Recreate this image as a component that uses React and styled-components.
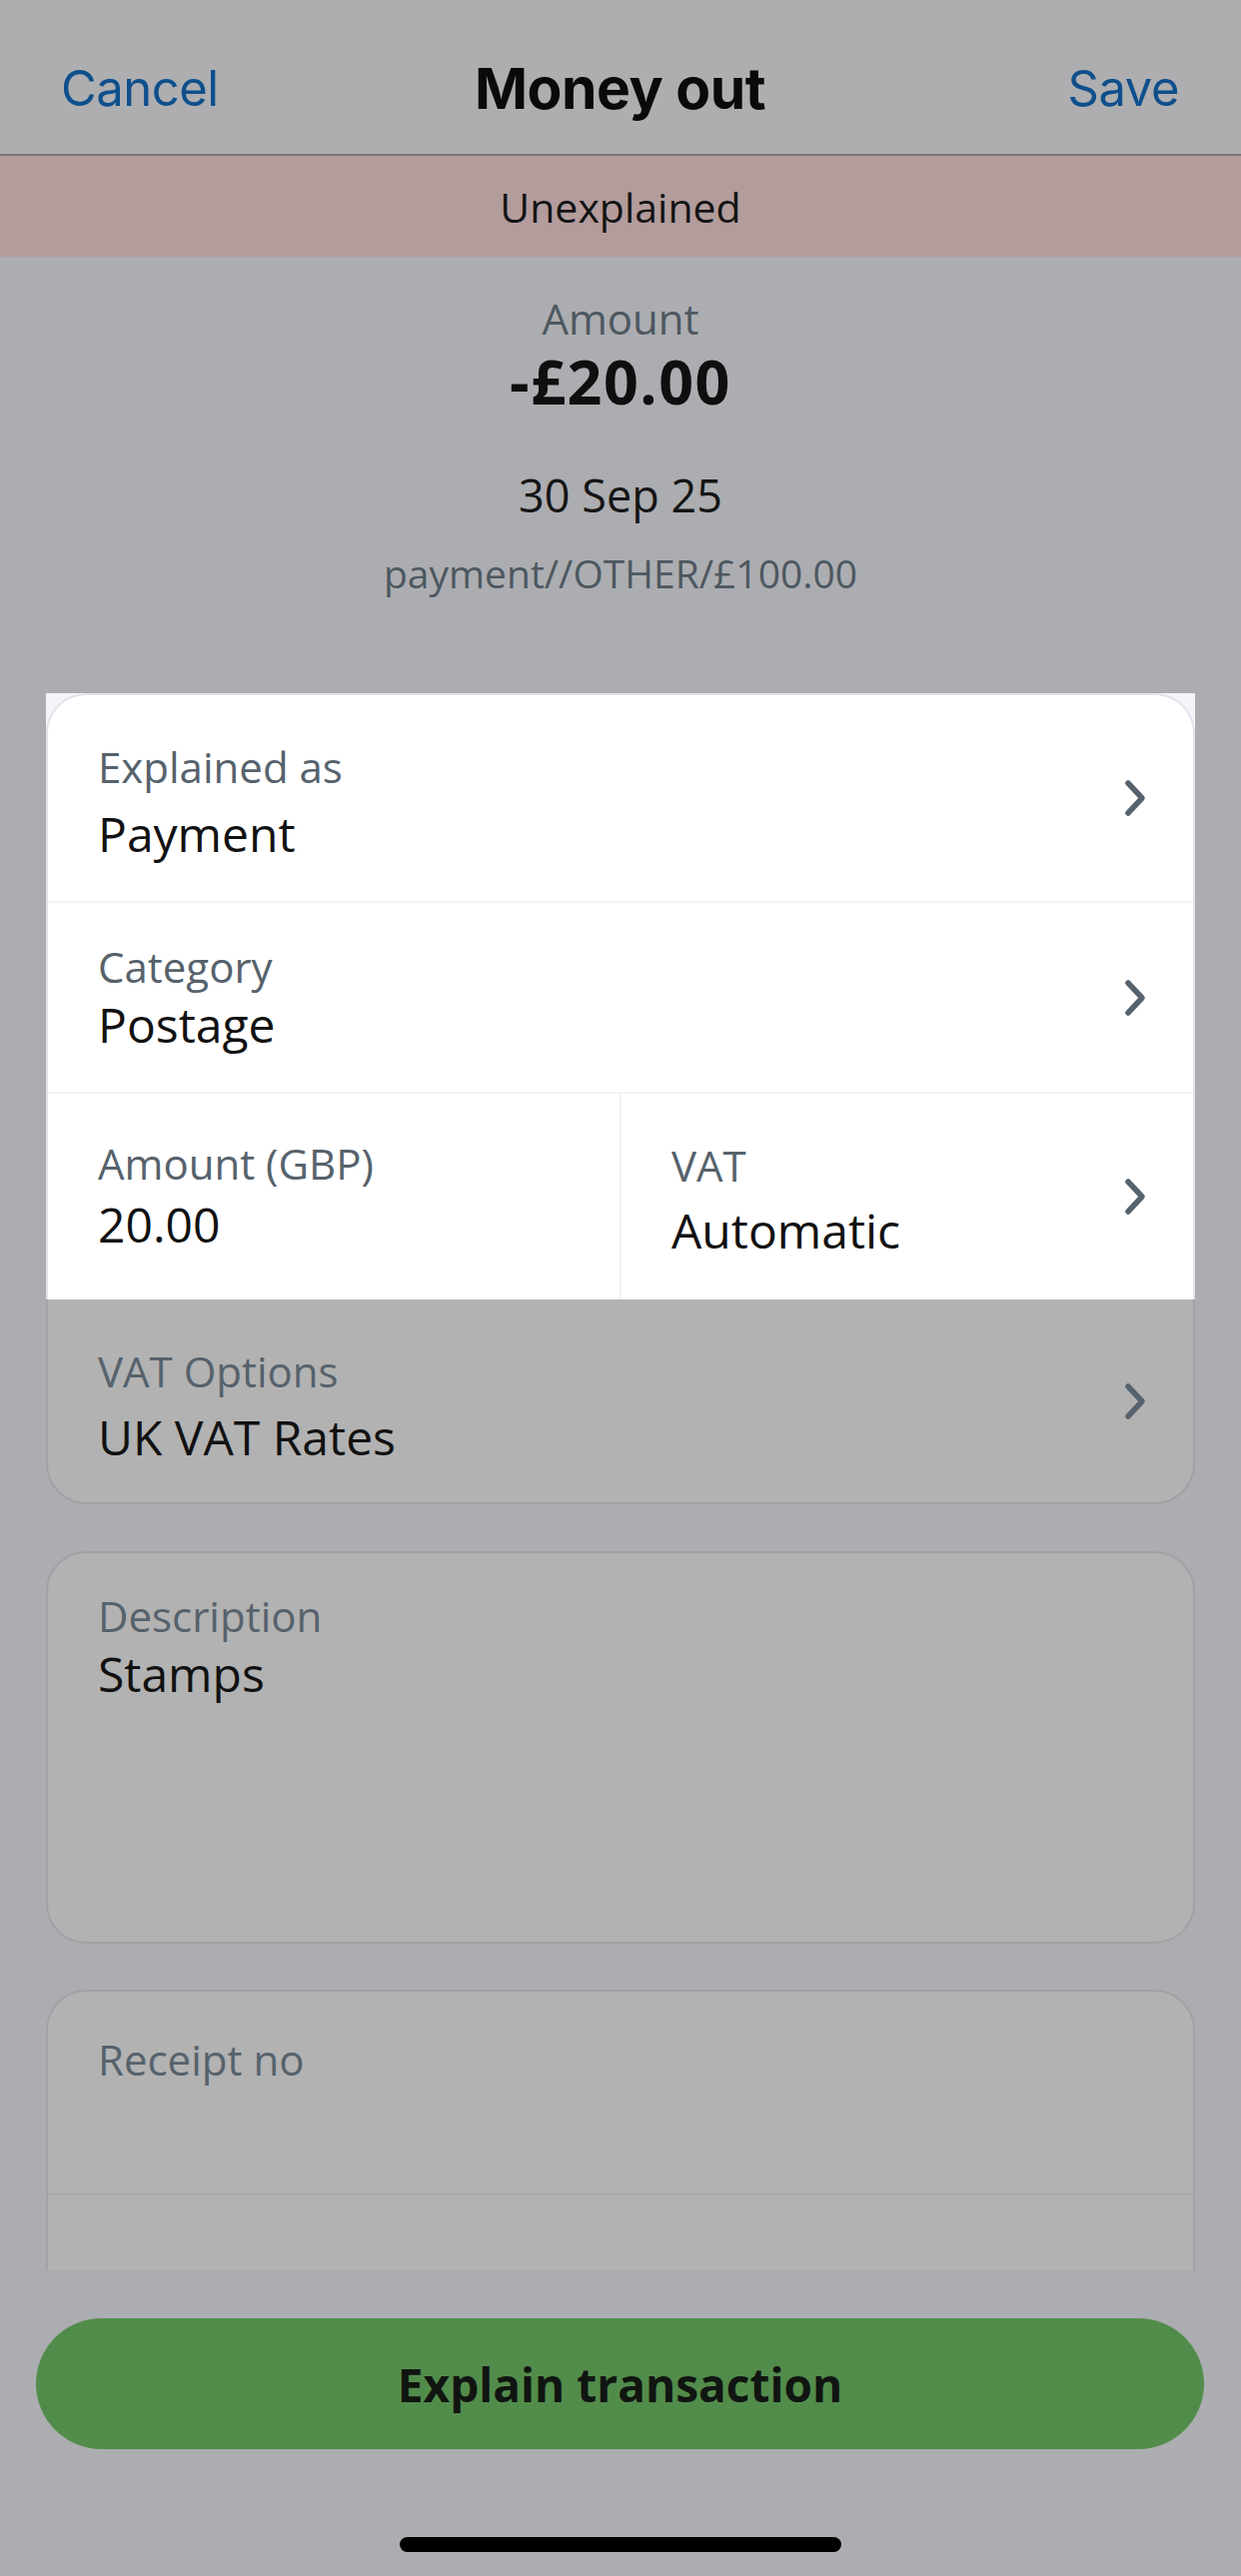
import styled, { createGlobalStyle } from "styled-components";

const GlobalStyle = createGlobalStyle`
  html, body {
    margin: 0;
    padding: 0;
    background: #acadb1;
  }
  * {
    box-sizing: border-box;
  }
`;

const StScreen = styled.div`
  width: 1242px;
  height: 2579px;
  display: flex;
  flex-direction: column;
  background: #acadb1;
  font-family: "Open Sans", Lato, sans-serif;
  overflow: hidden;
`;

const StNavBar = styled.header`
  height: 156px;
  padding: 22px 62px 0 61px;
  display: grid;
  grid-template-columns: 1fr auto 1fr;
  align-items: center;
  background: #aeaeb0;
  border-bottom: 2px solid #7b7375;
  font-family: Inter, "Liberation Sans", sans-serif;
`;

const StNavButton = styled.span`
  font-size: 49px;
  color: #0e4f8c;
  letter-spacing: -0.5px;
  justify-self: ${({ $end }) => ($end ? "end" : "start")};
`;

const StNavTitle = styled.h1`
  margin: 0;
  font-size: 57px;
  font-weight: 700;
  color: #0a0a0a;
  letter-spacing: -0.5px;
`;

const StStatusBanner = styled.div`
  height: 101px;
  display: flex;
  align-items: center;
  justify-content: center;
  background: #b39c9c;
  font-size: 41px;
  color: #141414;
`;

const StScroll = styled.main`
  height: 2016px;
  overflow: hidden;
  display: flex;
  flex-direction: column;
  padding: 0 46px;
`;

const StSummary = styled.section`
  display: flex;
  flex-direction: column;
  align-items: center;
  padding-top: 38px;
  margin-bottom: 97px;
`;

const StSummaryLabel = styled.div`
  font-size: 42px;
  line-height: 48px;
  color: #4d5860;
`;

const StSummaryAmount = styled.div`
  font-size: 61px;
  line-height: 72px;
  font-weight: 700;
  letter-spacing: 1.5px;
  color: #0f0f0f;
  margin-top: 3px;
`;

const StSummaryDate = styled.div`
  font-size: 45px;
  line-height: 50px;
  color: #151515;
  margin-top: 53px;
`;

const StSummaryRef = styled.div`
  font-size: 39px;
  line-height: 46px;
  color: #4d5860;
  margin-top: 30px;
`;

const StSpotlight = styled.div`
  background: #f4f5fa;
`;

const StCardTop = styled.div`
  background: #ffffff;
  border: 2px solid #e2e4ea;
  border-bottom: none;
  border-radius: 40px 40px 0 0;
`;

const StCardBottom = styled.div`
  background: #b2b2b2;
  border: 2px solid #a1a2a7;
  border-top: none;
  border-radius: 0 0 40px 40px;
`;

const StRow = styled.div`
  display: flex;
  align-items: stretch;
  border-top: ${({ $divided }) => ($divided ? "2px solid #f1f2f6" : "none")};
`;

const StField = styled.div`
  flex: ${({ $stacked }) => ($stacked ? "none" : "1")};
  display: flex;
  align-items: center;
  padding: 0 50px;
  border-left: ${({ $split }) => ($split ? "2px solid #f1f2f6" : "none")};
  min-width: 0;
`;

const StFieldText = styled.div`
  flex: 1;
  align-self: flex-start;
  display: flex;
  flex-direction: column;
  padding: ${({ $pad }) => `${$pad[0]}px 0 ${$pad[2]}px 0`};
  gap: ${({ $pad }) => $pad[1]}px;
`;

const StFieldLabel = styled.div`
  font-size: 42px;
  line-height: 48px;
  color: #56626c;
`;

const StFieldValue = styled.div`
  font-size: 48px;
  line-height: 56px;
  color: #111111;
  min-height: 56px;
`;

const StChevron = styled.svg`
  flex-shrink: 0;
  margin-right: -5px;
`;

const StBox = styled.div`
  background: #b2b2b2;
  border: 2px solid #a1a2a7;
  border-radius: 40px;
  height: ${({ $height }) => $height}px;
  margin-top: ${({ $gap }) => $gap}px;
  flex-shrink: 0;
  display: flex;
  flex-direction: column;
`;

const StBoxDivider = styled.div`
  border-top: 2px solid #a9aaae;
  margin-top: ${({ $offset }) => $offset}px;
`;

const StFooter = styled.footer`
  flex: 1;
  display: flex;
  flex-direction: column;
  align-items: center;
  padding: 48px 37px 0 36px;
`;

const StPrimaryButton = styled.button`
  width: 100%;
  height: 131px;
  border: none;
  border-radius: 66px;
  background: #528c4b;
  color: #111511;
  font-family: "Open Sans", Lato, sans-serif;
  font-size: 46px;
  font-weight: 700;
`;

const StHomeIndicator = styled.div`
  width: 442px;
  height: 15px;
  border-radius: 8px;
  background: #000000;
  margin-top: 88px;
`;

const Chevron = () => (
  <StChevron width="26" height="38" viewBox="0 0 26 38" fill="none">
    <path
      d="M6 4 L20 19 L6 34"
      stroke="#56636e"
      strokeWidth="5.5"
      strokeLinecap="round"
      strokeLinejoin="round"
    />
  </StChevron>
);

// pad = [top, gap between label and value, bottom]
const Field = ({ label, value, chevron, split, stacked, pad }) => (
  <StField $split={split} $stacked={stacked}>
    <StFieldText $pad={pad}>
      <StFieldLabel>{label}</StFieldLabel>
      <StFieldValue>{value}</StFieldValue>
    </StFieldText>
    {chevron && <Chevron />}
  </StField>
);

const App = () => {
  return (
    <>
      <GlobalStyle />
      <StScreen>
        <StNavBar>
          <StNavButton>Cancel</StNavButton>
          <StNavTitle>Money out</StNavTitle>
          <StNavButton $end>Save</StNavButton>
        </StNavBar>
        <StStatusBanner>Unexplained</StStatusBanner>

        <StScroll>
          <StSummary>
            <StSummaryLabel>Amount</StSummaryLabel>
            <StSummaryAmount>-£20.00</StSummaryAmount>
            <StSummaryDate>30 Sep 25</StSummaryDate>
            <StSummaryRef>payment//OTHER/£100.00</StSummaryRef>
          </StSummary>

          <StSpotlight>
            <StCardTop>
              <StRow>
                <Field label="Explained as" value="Payment" chevron pad={[48, 15, 39]} />
              </StRow>
              <StRow $divided>
                <Field label="Category" value="Postage" chevron pad={[40, 6, 39]} />
              </StRow>
              <StRow $divided>
                <Field label="Amount (GBP)" value="20.00" pad={[46, 9, 47]} />
                <Field label="VAT" value="Automatic" chevron split pad={[48, 13, 41]} />
              </StRow>
            </StCardTop>
          </StSpotlight>
          <StCardBottom>
            <StRow>
              <Field label="VAT Options" value="UK VAT Rates" chevron pad={[48, 14, 37]} />
            </StRow>
          </StCardBottom>

          <StBox $height={393} $gap={47}>
            <Field label="Description" value="Stamps" stacked pad={[39, 6, 0]} />
          </StBox>

          <StBox $height={400} $gap={46}>
            <Field label="Receipt no" value="" stacked pad={[44, 6, 0]} />
            <StBoxDivider $offset={48} />
          </StBox>
        </StScroll>

        <StFooter>
          <StPrimaryButton>Explain transaction</StPrimaryButton>
          <StHomeIndicator />
        </StFooter>
      </StScreen>
    </>
  );
};

export default App;
